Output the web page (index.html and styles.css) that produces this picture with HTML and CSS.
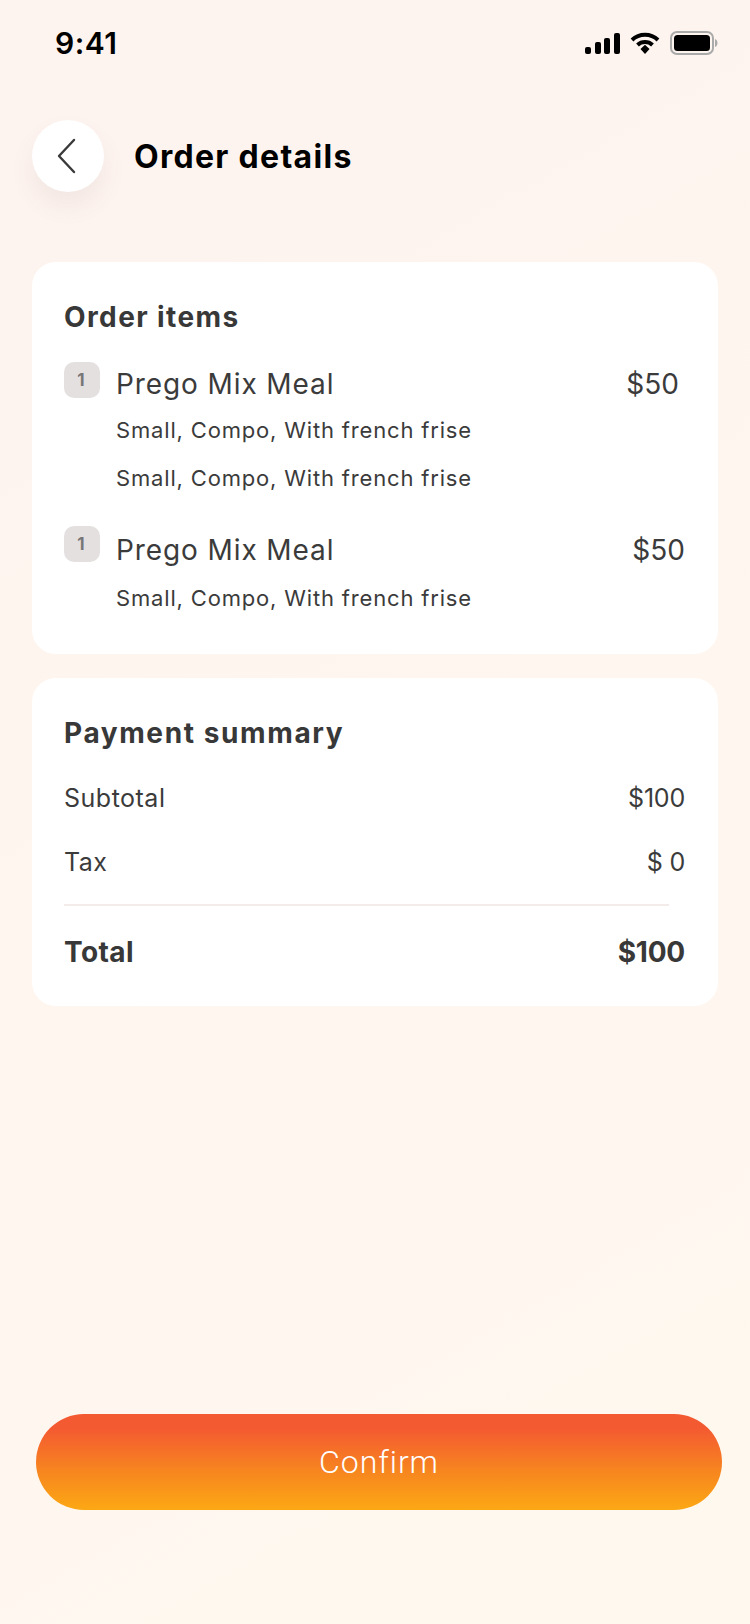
FILE: index.html
```html
<!DOCTYPE html>
<html lang="en">
<head>
    <meta charset="UTF-8">
    <meta name="viewport" content="width=device-width, initial-scale=1.0">
    <title>Order details</title>
    <link rel="stylesheet" href="styles.css">
</head>
<body>
    <div class="page">
        <div class="status-bar">
            <span class="time">9:41</span>
            <div class="status-icons">
                <svg width="35" height="21" viewBox="0 0 35 21">
                    <rect x="0" y="14" width="6" height="7" rx="2"/>
                    <rect x="10" y="9" width="6" height="12" rx="2"/>
                    <rect x="19" y="5" width="6" height="16" rx="2"/>
                    <rect x="29" y="0" width="6" height="21" rx="2"/>
                </svg>
                <svg width="30" height="22" viewBox="0 0 30 22">
                    <path d="M2 8 A19 19 0 0 1 28 8" fill="none" stroke="#000" stroke-width="4"/>
                    <path d="M7.5 13 A11 11 0 0 1 22.5 13" fill="none" stroke="#000" stroke-width="4"/>
                    <path d="M10.5 17 L15 12.8 L19.5 17 L15 22 Z"/>
                </svg>
                <svg width="48" height="24" viewBox="0 0 48 24">
                    <rect x="1" y="1" width="42" height="22" rx="6" fill="none" stroke="#aaa" stroke-width="2"/>
                    <rect x="4" y="4" width="36" height="16" rx="3.5"/>
                    <path d="M45 8 C47 9 47.5 10.5 47.5 12 C47.5 13.5 47 15 45 16 Z" fill="#aaa"/>
                </svg>
            </div>
        </div>

        <header class="top-bar">
            <button class="back-btn">
                <svg width="20" height="36" viewBox="0 0 20 36">
                    <path d="M18 2 L3 18 L18 34" fill="none" stroke="#3a3a3a" stroke-width="2.4" stroke-linecap="round" stroke-linejoin="round"/>
                </svg>
            </button>
            <h1 class="title">Order details</h1>
        </header>

        <section class="card items-card">
            <h2 class="card-title">Order items</h2>
            <div class="item first-item">
                <span class="qty">1</span>
                <div class="item-body">
                    <div class="item-head">
                        <span class="item-name">Prego Mix Meal</span>
                        <span class="item-price">$50</span>
                    </div>
                    <p class="item-note">Small, Compo, With french frise</p>
                    <p class="item-note">Small, Compo, With french frise</p>
                </div>
            </div>
            <div class="item second-item">
                <span class="qty">1</span>
                <div class="item-body">
                    <div class="item-head">
                        <span class="item-name">Prego Mix Meal</span>
                        <span class="item-price">$50</span>
                    </div>
                    <p class="item-note">Small, Compo, With french frise</p>
                </div>
            </div>
        </section>

        <section class="card summary-card">
            <h2 class="card-title">Payment summary</h2>
            <div class="row"><span>Subtotal</span><span class="amount">$100</span></div>
            <div class="row"><span>Tax</span><span class="amount">$ 0</span></div>
            <div class="divider"></div>
            <div class="row total"><span>Total</span><span class="amount">$100</span></div>
        </section>

        <div class="footer">
            <button class="confirm-btn">Confirm</button>
        </div>
    </div>
</body>
</html>
```
FILE: styles.css
```css
* {
    box-sizing: border-box;
}
body {
    margin: 0;
    font-family: "Inter", "Open Sans", sans-serif;
    color: #333;
}
.page {
    width: 750px;
    height: 1624px;
    display: flex;
    flex-direction: column;
    padding: 0 32px;
    background: linear-gradient(150deg, #fdf3ef 0%, #fef5ef 35%, #fff8ef 90%);
}
.status-bar {
    height: 88px;
    flex: none;
    display: flex;
    align-items: center;
    justify-content: space-between;
    padding: 0 0 2px 23px;
}
.time {
    font-family: "Inter", sans-serif;
    font-size: 30px;
    font-weight: 600;
    color: #000;
    letter-spacing: 0.5px;
}
.status-icons {
    display: flex;
    align-items: center;
    gap: 10px;
}
.top-bar {
    display: flex;
    align-items: center;
    gap: 30px;
    margin-top: 32px;
    height: 72px;
}
.back-btn {
    width: 72px;
    height: 72px;
    border: none;
    border-radius: 50%;
    background: #fff;
    box-shadow: 0 14px 24px rgba(120, 90, 90, 0.08);
    display: flex;
    align-items: center;
    justify-content: center;
    padding: 0 4px 0 0;
}
.title {
    margin: 0;
    font-size: 32px;
    font-weight: 700;
    color: #000;
    letter-spacing: 1.3px;
}
.card {
    background: #fff;
    border-radius: 24px;
    padding: 0 32px;
}
.items-card {
    margin-top: 70px;
    height: 392px;
    padding-top: 37px;
}
.summary-card {
    margin-top: 24px;
    height: 328px;
    padding-top: 37px;
}
.card-title {
    margin: 0;
    font-size: 28px;
    line-height: 36px;
    font-weight: 700;
    color: #383838;
    letter-spacing: 1.6px;
}
.items-card .card-title {
    letter-spacing: 1.4px;
}
.item {
    display: flex;
    gap: 16px;
}
.first-item {
    margin-top: 27px;
}
.second-item {
    margin-top: 31px;
}
.qty {
    flex: none;
    width: 36px;
    height: 36px;
    border-radius: 10px;
    background: #e4e0e0;
    color: #777;
    font-size: 17px;
    font-weight: 700;
    display: flex;
    align-items: center;
    justify-content: center;
    padding-right: 2px;
}
.item-body {
    flex: 1;
}
.item-head {
    display: flex;
    justify-content: space-between;
    align-items: center;
    height: 44px;
}
.first-item .item-head {
    padding-right: 6px;
}
.second-item .item-head {
    margin-top: 2px;
}
.item-name {
    font-size: 28px;
    color: #3b3b3b;
    letter-spacing: 0.9px;
}
.item-price {
    font-size: 28px;
    color: #3b3b3b;
    padding-right: 1px;
}
.item-note {
    margin: 14px 0 0;
    font-size: 22px;
    line-height: 34px;
    color: #3b3b3b;
    letter-spacing: 0.83px;
}
.item-head + .item-note {
    margin-top: 7px;
}
.second-item .item-head + .item-note {
    margin-top: 9px;
}
.row {
    display: flex;
    justify-content: space-between;
    align-items: center;
    font-size: 25px;
    line-height: 36px;
    color: #3b3b3b;
    margin-top: 28px;
    letter-spacing: 0.5px;
}
.amount {
    letter-spacing: -0.2px;
    padding-right: 1px;
}
.card-title + .row {
    margin-top: 29px;
}
.divider {
    height: 2px;
    width: 605px;
    background: #f3ecea;
    margin-top: 24px;
}
.row.total {
    font-size: 28px;
    font-weight: 700;
    color: #383838;
    margin-top: 28px;
    letter-spacing: 0.4px;
}
.row.total .amount {
    letter-spacing: -0.2px;
}
.footer {
    margin-top: auto;
    padding: 0 0 114px 4px;
}
.confirm-btn {
    width: 686px;
    height: 96px;
    border: none;
    border-radius: 48px;
    background: linear-gradient(180deg, #f45a31 0%, #f45a31 15%, #f7861f 60%, #fca814 100%);
    color: #fff;
    font-family: "Roboto", sans-serif;
    font-size: 32px;
    font-weight: 300;
    letter-spacing: 0.95px;
}
```
